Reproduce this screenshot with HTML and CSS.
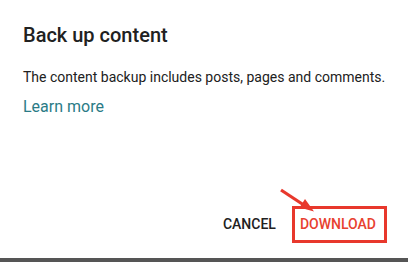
FILE: index.html
```html
<!DOCTYPE html>
<html lang="en">
<head>
<meta charset="utf-8">
<title>Back up content</title>
<link rel="stylesheet" href="styles.css">
</head>
<body>
<div class="page">
  <div class="dialog">
    <h2 class="title">Back up content</h2>
    <p class="text">The content backup includes posts, pages and comments.</p>
    <a class="link" href="#">Learn more</a>
    <div class="actions">
      <button class="btn cancel">CANCEL</button>
      <button class="btn download">DOWNLOAD</button>
      <svg class="arrow" width="40" height="30" viewBox="0 0 40 30">
        <line x1="3" y1="5" x2="25" y2="19.5" stroke="#e8382c" stroke-width="3.2"/>
        <polygon points="36,26.5 27,14 21.6,22.5" fill="#e8382c"/>
      </svg>
    </div>
  </div>
  <div class="bar"></div>
</div>
</body>
</html>
```
FILE: styles.css
```css
html, body {
  margin: 0;
  padding: 0;
  background: #ffffff;
}
.page {
  height: 262px;
  display: flex;
  flex-direction: column;
  font-family: Roboto, "Liberation Sans", sans-serif;
  color: #212121;
}
.dialog {
  padding: 23px 22px 0 23px;
  display: flex;
  flex-direction: column;
  align-items: flex-start;
}
.title {
  margin: 0;
  font-size: 20px;
  line-height: 24px;
  font-weight: 500;
  color: #212121;
}
.text {
  margin: 20px 0 0 0;
  font-size: 14px;
  line-height: 20px;
  color: #212121;
}
.link {
  margin-top: 10px;
  font-size: 16px;
  line-height: 20px;
  color: #2a7b86;
  text-decoration: none;
}
.actions {
  position: relative;
  align-self: stretch;
  margin-top: 89px;
  display: flex;
  justify-content: flex-end;
  align-items: center;
  gap: 8px;
}
.btn {
  font-family: Roboto, "Liberation Sans", sans-serif;
  font-size: 14px;
  font-weight: 500;
  background: none;
  border: none;
  margin: 0;
  cursor: pointer;
}
.cancel {
  padding: 0 8px;
  line-height: 37px;
  color: #212121;
}
.download {
  padding: 0 8px 0 5px;
  line-height: 31px;
  border: 3px solid #e8382c;
  color: #e8412f;
}
.arrow {
  position: absolute;
  left: 255px;
  top: -21px;
}
.bar {
  margin-top: auto;
  width: 408px;
  height: 4px;
  background: #555555;
}
```
